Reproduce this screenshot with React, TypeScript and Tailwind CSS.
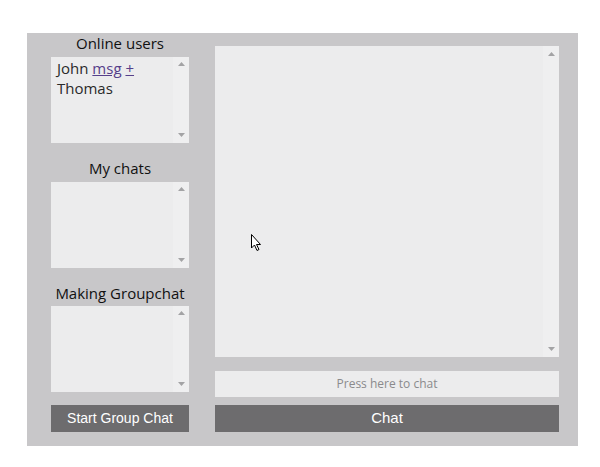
import React from "react";

const SANS = "'Open Sans', Lato, 'Noto Sans', sans-serif";

function ScrollTrack({ top, bottom }: { top: string; bottom: string }) {
  return (
    <div className="flex w-[16px] flex-col items-center justify-between bg-[#efeff0]">
      <div className={top}>
        <svg width="7" height="4" viewBox="0 0 7 4"><polygon points="0,4 7,4 3.5,0" fill="#a3a3a5" /></svg>
      </div>
      <div className={bottom}>
        <svg width="7" height="4" viewBox="0 0 7 4"><polygon points="0,0 7,0 3.5,4" fill="#a3a3a5" /></svg>
      </div>
    </div>
  );
}

function Box({ children }: { children?: React.ReactNode }) {
  return (
    <div className="flex h-[86px] w-[138px] bg-[#ececed]">
      <div className="flex-1 px-[6px] pt-[1px] text-[15px] leading-[20px] text-[#2a2a2a]" style={{ fontFamily: SANS }}>
        {children}
      </div>
      <ScrollTrack top="pt-[5px]" bottom="pb-[6px]" />
    </div>
  );
}

function Title({ children, cls }: { children: React.ReactNode; cls: string }) {
  return (
    <div className={`h-[20px] text-center text-[15px] leading-[20px] text-[#111] ${cls}`} style={{ fontFamily: SANS }}>
      {children}
    </div>
  );
}

export default function App() {
  return (
    <div className="h-[467px] w-[600px] bg-white pl-[27px] pt-[33px]">
      <div className="relative flex h-[413px] w-[551px] gap-[26px] bg-[#c8c7c9] pl-[24px]">
        <div className="flex w-[138px] flex-col">
          <Title cls="mt-[0px] mb-[4px]">Online users</Title>
          <Box>
            <div>
              John <span className="text-[#56408a] underline">msg</span>{" "}
              <span className="text-[#56408a] underline">+</span>
            </div>
            <div>Thomas</div>
          </Box>
          <Title cls="mt-[15px] mb-[4px]">My chats</Title>
          <Box />
          <Title cls="mt-[15px] mb-[3px]">Making Groupchat</Title>
          <Box />
          <button
            className="mt-[13px] h-[27px] w-[138px] bg-[#6d6c6e] text-[14px] text-white"
            style={{ fontFamily: "'Liberation Sans', Arial, sans-serif" }}
          >
            Start Group Chat
          </button>
        </div>
        <div className="flex w-[344px] flex-col pt-[13px]">
          <div className="flex h-[311px] bg-[#ececed]">
            <div className="flex-1" />
            <ScrollTrack top="pt-[6px]" bottom="pb-[6px]" />
          </div>
          <div
            className="mt-[14px] flex h-[26px] items-center justify-center bg-[#ececed] text-[12px] text-[#8a8a8c]"
            style={{ fontFamily: SANS }}
          >
            Press here to chat
          </div>
          <button
            className="mt-[8px] h-[27px] bg-[#6d6c6e] text-[15px] text-white"
            style={{ fontFamily: "'Liberation Sans', Arial, sans-serif" }}
          >
            Chat
          </button>
        </div>
        <svg className="absolute left-[224px] top-[201px]" width="12" height="18" viewBox="0 0 12 18">
          <path d="M0.5 0.5 L0.5 14 L3.5 11 L6 16.5 L8 15.5 L5.5 10.5 L9.5 10.5 Z" fill="white" stroke="black" strokeWidth="1" strokeLinejoin="round" />
        </svg>
      </div>
    </div>
  );
}
